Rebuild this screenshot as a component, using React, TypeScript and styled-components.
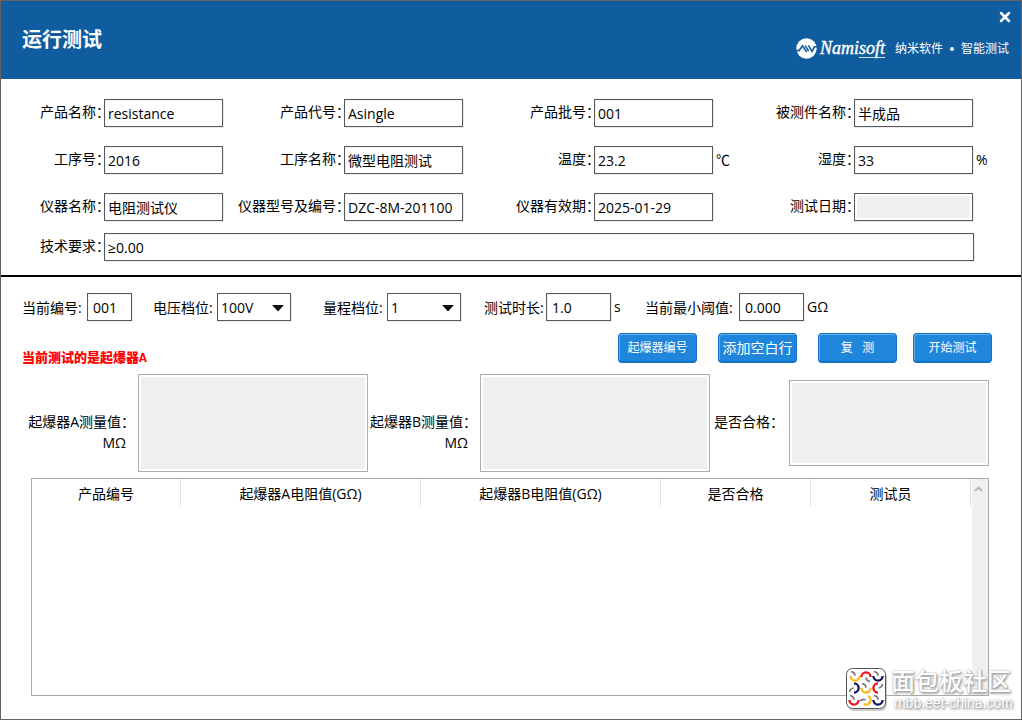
import React from "react";
import styled, { createGlobalStyle } from "styled-components";

const ink = "#000";
const fieldBorder = "#58585a";

const GlobalStyle = createGlobalStyle`
  *, *::before, *::after { box-sizing: border-box; }
  body { margin: 0; background: #fff; }
  body, input, select, button, textarea {
    font-family: "Open Sans", "Noto Sans CJK SC", sans-serif;
    font-size: 14px;
    color: ${ink};
  }
`;

const Window = styled.main`
  position: relative;
  display: flex;
  flex-direction: column;
  min-height: 100vh;
  border: 1px solid #636363;
  background: #fff;
`;

const Header = styled.header`
  display: flex;
  justify-content: space-between;
  height: 78px;
  padding: 0 10px 0 21px;
  background: #0f5d9f;
  color: #fff;
`;

const Title = styled.h1`
  margin: 0;
  align-self: center;
  font-size: 20px;
  line-height: 24px;
  font-weight: 700;
`;

const HeaderSide = styled.div`
  display: flex;
  flex-direction: column;
  align-items: flex-end;
  gap: 14px;
  padding-top: 10px;
`;

const CloseButton = styled.button`
  display: flex;
  width: 12px;
  height: 12px;
  padding: 0;
  border: 0;
  background: none;
  color: #fff;
  cursor: pointer;
`;

const Brand = styled.div`
  display: flex;
  align-items: center;
  gap: 2px;
  height: 22px;
  margin-right: 2px;
`;

const BrandName = styled.span`
  padding-left: 1px;
  font-family: "Liberation Serif", serif;
  font-style: italic;
  font-size: 18px;
  line-height: 20px;
  -webkit-text-stroke: 0.4px #fff;
`;

const BrandTail = styled.span`
  display: inline-block;
  border-bottom: 1px solid #cfe0ee;
  line-height: 18px;
`;

const Tagline = styled.span`
  display: flex;
  align-items: center;
  gap: 7px;
  margin-left: 8px;
  padding-top: 1px;
  font-size: 12px;
  line-height: 16px;
`;

const Dot = styled.span`
  width: 4px;
  height: 4px;
  border-radius: 50%;
  background: #fff;
`;

const InfoForm = styled.form`
  display: grid;
  grid-template-columns:
    103px minmax(0, 1fr) 14px 107px minmax(0, 1fr) 14px
    117px minmax(0, 1fr) 14px 127px minmax(0, 1fr) 14px;
  row-gap: 19px;
  padding: 20px 34px 12px 0;
`;

const WideForm = styled.form`
  display: grid;
  grid-template-columns: 103px minmax(0, 1fr);
  padding: 0 47px 14px 0;
  border-bottom: 2px solid #000;
`;

const FormLabel = styled.label`
  justify-self: end;
  margin-right: -6px;
  line-height: 26px;
  white-space: nowrap;
`;

const Unit = styled.span`
  padding-left: 3px;
  line-height: 28px;
  white-space: nowrap;
`;

const TextInput = styled.input<{ $inset?: number }>`
  position: relative;
  width: 100%;
  min-width: 0;
  height: 28px;
  padding: 0 3px 0 ${(p) => p.$inset ?? 3}px;
  border: 1px solid ${fieldBorder};
  border-radius: 0;
  outline: 0;
  background: #fff;
  box-shadow: 1px 1px 0 #ececec, inset 1px 1px 0 #f3f3f3;

  &:disabled {
    background: #efefef;
    box-shadow: 1px 1px 0 #ececec, inset 0 0 0 2px #fff;
  }
`;

const Settings = styled.form`
  display: grid;
  grid-template-columns: 131px 170px 161px 161px 1fr;
  padding: 16px 21px 12px;
`;

const Setting = styled.div<{ $label: number; $field: number }>`
  display: grid;
  grid-template-columns: ${(p) => p.$label}px ${(p) => p.$field}px auto;
  justify-content: start;
  height: 28px;
  line-height: 30px;
  white-space: nowrap;
`;

const SelectBox = styled.div`
  position: relative;
  height: 28px;

  svg {
    position: absolute;
    right: 7px;
    top: 12px;
    pointer-events: none;
  }
`;

const Select = styled.select`
  display: block;
  width: 100%;
  height: 28px;
  padding: 1px 20px 0 3px;
  border: 1px solid ${fieldBorder};
  border-radius: 0;
  background: #fff;
  appearance: none;
  box-shadow: 1px 1px 0 #ececec;
`;

const ActionRow = styled.div`
  display: flex;
  align-items: flex-start;
  justify-content: space-between;
  padding: 0 29px 7px 21px;
`;

const Notice = styled.p`
  margin: 0;
  padding-top: 18px;
  color: #f00;
  font-family: "Liberation Mono", "Noto Sans CJK SC", monospace;
  font-size: 13px;
  line-height: 16px;
  font-weight: 900;
`;

const Actions = styled.div`
  display: flex;
  gap: 21px;
`;

const ActionButton = styled.button<{ $large?: boolean }>`
  width: 79px;
  height: 30px;
  padding: 1px 0 0;
  border: 1px solid #1272c8;
  border-bottom-width: 2px;
  border-radius: 4px;
  background: #2086dc;
  box-shadow: inset 1px 1px 0 #62aeea;
  color: #fff;
  font-size: ${(p) => (p.$large ? 14 : 12)}px;
  line-height: 26px;
  font-weight: 400;
  white-space: pre;
  cursor: pointer;

  &:last-child { margin-left: -5px; }
`;

const Readings = styled.div`
  display: grid;
  grid-template-columns: 137px 230fr 112px 230fr 79px 200fr;
  align-items: start;
  padding-right: 32px;
`;

const ReadingLabel = styled.label<{ $end: number }>`
  display: flex;
  flex-direction: column;
  align-items: flex-end;
  padding: 37px ${(p) => p.$end}px 0 0;
  line-height: 21px;
  white-space: nowrap;
`;

const ReadingUnit = styled.span`
  padding-right: 9px;
`;

const ReadingBox = styled.input<{ $small?: boolean }>`
  width: 100%;
  min-width: 0;
  height: ${(p) => (p.$small ? 86 : 98)}px;
  margin: ${(p) => (p.$small ? 6 : 0)}px 0 0;
  padding: 0 8px;
  border: 1px solid #abadb3;
  border-radius: 0;
  background: #efefef;
  box-shadow: inset 0 0 0 2px #fff;
  font-size: 32px;
`;

const TablePanel = styled.section`
  display: flex;
  flex: 1;
  min-height: 200px;
  margin: 6px 32px 23px 30px;
  border: 1px solid #a9a9a9;
`;

const TableArea = styled.div`
  flex: 1;
  min-width: 0;
`;

const ResultTable = styled.table`
  width: 100%;
  border-collapse: separate;
  border-spacing: 0;
  table-layout: fixed;
`;

const HeadCell = styled.th`
  height: 26px;
  padding: 3px 0 0;
  border-right: 1px solid #e2e2e2;
  font-weight: 400;
  line-height: 24px;
  white-space: nowrap;
`;

const ScrollTrack = styled.div`
  display: flex;
  justify-content: center;
  width: 16px;
  margin-left: 1px;
  padding: 7px 3px 0 0;
  background: #f0f0f0;
`;

const Watermark = styled.aside`
  position: absolute;
  right: 8px;
  bottom: 7px;
  display: flex;
  gap: 3px;
  color: #fff;
  pointer-events: none;
`;

const WatermarkText = styled.div`
  display: flex;
  flex-direction: column;
  font-family: "Liberation Sans", "Noto Sans CJK SC", sans-serif;
  text-shadow: 0 0 2px #aaa, 1px 1px 2px #999, 1px 2px 3px #bbb;
`;

const WatermarkName = styled.span`
  font-size: 24px;
  line-height: 27px;
  font-weight: 500;
`;

const WatermarkUrl = styled.span`
  padding-left: 3px;
  font-size: 14px;
  line-height: 16px;
`;

const CloseIcon = () => (
  <svg width="12" height="12" viewBox="0 0 12 12" aria-hidden="true">
    <path d="M2 2L10 10M10 2L2 10" stroke="currentColor" strokeWidth="2.5" strokeLinecap="round" />
  </svg>
);

const BrandMark = () => (
  <svg width="21" height="21" viewBox="0 0 21 21" aria-hidden="true">
    <circle cx="10.5" cy="10.5" r="10.2" fill="#fff" />
    <g fill="none" stroke="#0f5d9f" strokeWidth="1.6">
      <path d="M0 12.6H3L6.6 7.8L10.6 14" />
      <path d="M9.2 7.6L12.6 13.2" />
      <path d="M12.4 7.4L16 13.4L18.4 8.8H21" />
    </g>
  </svg>
);

const Caret = () => (
  <svg width="12" height="7" viewBox="0 0 12 7" aria-hidden="true">
    <path d="M0 0H12L6 6.5Z" fill="#111" />
  </svg>
);

const ScrollUp = () => (
  <svg width="9" height="6" viewBox="0 0 9 6" aria-hidden="true">
    <path d="M1 5L4.5 1.5L8 5" fill="none" stroke="#b5b5b5" strokeWidth="1.8" />
  </svg>
);

const yellow = "#fdb813";
const red = "#f01018";
const navy = "#14145c";

const arcs = [
  { x: 9, y: 8, turn: 0, color: yellow },
  { x: 20, y: 9, turn: 180, color: red },
  { x: 32, y: 8, turn: 0, color: navy },
  { x: 8, y: 20, turn: -90, color: navy },
  { x: 20, y: 20, turn: 0, color: yellow },
  { x: 32, y: 20, turn: 90, color: red },
  { x: 8, y: 32, turn: 0, color: red },
  { x: 20, y: 32, turn: -60, color: yellow },
  { x: 32, y: 32, turn: 0, color: navy },
];

const CommunityMark = () => (
  <svg width="42" height="44" viewBox="0 0 42 44" aria-hidden="true">
    <rect x="2" y="3" width="39" height="40" rx="6" fill="#999" opacity=".5" />
    <rect x="0.5" y="0.5" width="39" height="40" rx="6" fill="#fff" stroke="#555" />
    {arcs.map((a) => (
      <g key={`${a.x}-${a.y}`} transform={`translate(${a.x} ${a.y}) rotate(${a.turn})`} fill="none">
        <path d="M-4 -4.4A4.5 4.5 0 0 1 0 -0.4" stroke="#777" strokeWidth="1.7" />
        <path d="M-4.6 0A4.6 4.6 0 0 0 4.6 0" stroke={a.color} strokeWidth="2.3" />
      </g>
    ))}
  </svg>
);

interface Field {
  id: string;
  label: string;
  value?: string;
  unit?: string;
  disabled?: boolean;
}

const fields: Field[] = [
  { id: "product-name", label: "产品名称：", value: "resistance" },
  { id: "product-code", label: "产品代号：", value: "Asingle" },
  { id: "product-batch", label: "产品批号：", value: "001" },
  { id: "part-name", label: "被测件名称：", value: "半成品" },
  { id: "process-no", label: "工序号：", value: "2016" },
  { id: "process-name", label: "工序名称：", value: "微型电阻测试" },
  { id: "temperature", label: "温度：", value: "23.2", unit: "℃" },
  { id: "humidity", label: "湿度：", value: "33", unit: "%" },
  { id: "meter-name", label: "仪器名称：", value: "电阻测试仪" },
  { id: "meter-model", label: "仪器型号及编号：", value: "DZC-8M-201100" },
  { id: "meter-expiry", label: "仪器有效期：", value: "2025-01-29" },
  { id: "test-date", label: "测试日期：", value: "", disabled: true },
];

const columns = [
  { name: "产品编号", width: 149 },
  { name: "起爆器A电阻值(GΩ)", width: 240 },
  { name: "起爆器B电阻值(GΩ)", width: 240 },
  { name: "是否合格", width: 150 },
  { name: "测试员", width: 160 },
];

export default function App() {
  return (
    <>
      <GlobalStyle />
      <Window>
        <Header>
          <Title>运行测试</Title>
          <HeaderSide>
            <CloseButton type="button" aria-label="关闭">
              <CloseIcon />
            </CloseButton>
            <Brand>
              <BrandMark />
              <BrandName>
                Nami<BrandTail>soft</BrandTail>
              </BrandName>
              <Tagline>
                <span>纳米软件</span>
                <Dot />
                <span>智能测试</span>
              </Tagline>
            </Brand>
          </HeaderSide>
        </Header>

        <InfoForm>
          {fields.map((f) => (
            <React.Fragment key={f.id}>
              <FormLabel htmlFor={f.id}>{f.label}</FormLabel>
              <TextInput id={f.id} defaultValue={f.value} disabled={f.disabled} />
              <Unit>{f.unit}</Unit>
            </React.Fragment>
          ))}
        </InfoForm>
        <WideForm>
          <FormLabel htmlFor="requirement">技术要求：</FormLabel>
          <TextInput id="requirement" defaultValue="≥0.00" />
        </WideForm>

        <Settings>
          <Setting $label={65} $field={45}>
            <label htmlFor="current-no">当前编号:</label>
            <TextInput id="current-no" $inset={5} defaultValue="001" />
          </Setting>
          <Setting $label={64} $field={74}>
            <label htmlFor="voltage">电压档位:</label>
            <SelectBox>
              <Select id="voltage" defaultValue="100V">
                <option>100V</option>
              </Select>
              <Caret />
            </SelectBox>
          </Setting>
          <Setting $label={64} $field={74}>
            <label htmlFor="range">量程档位:</label>
            <SelectBox>
              <Select id="range" defaultValue="1">
                <option>1</option>
              </Select>
              <Caret />
            </SelectBox>
          </Setting>
          <Setting $label={62} $field={65}>
            <label htmlFor="duration">测试时长:</label>
            <TextInput id="duration" $inset={5} defaultValue="1.0" />
            <Unit>s</Unit>
          </Setting>
          <Setting $label={94} $field={65}>
            <label htmlFor="threshold">当前最小阈值:</label>
            <TextInput id="threshold" $inset={5} defaultValue="0.000" />
            <Unit>GΩ</Unit>
          </Setting>
        </Settings>

        <ActionRow>
          <Notice>当前测试的是起爆器A</Notice>
          <Actions>
            <ActionButton type="button">起爆器编号</ActionButton>
            <ActionButton type="button" $large>添加空白行</ActionButton>
            <ActionButton type="button">{"复   测"}</ActionButton>
            <ActionButton type="button">开始测试</ActionButton>
          </Actions>
        </ActionRow>

        <Readings>
          <ReadingLabel htmlFor="reading-a" $end={3}>
            <span>起爆器A测量值：</span>
            <ReadingUnit>MΩ</ReadingUnit>
          </ReadingLabel>
          <ReadingBox id="reading-a" disabled />
          <ReadingLabel htmlFor="reading-b" $end={3}>
            <span>起爆器B测量值：</span>
            <ReadingUnit>MΩ</ReadingUnit>
          </ReadingLabel>
          <ReadingBox id="reading-b" disabled />
          <ReadingLabel htmlFor="verdict" $end={5}>
            <span>是否合格：</span>
          </ReadingLabel>
          <ReadingBox id="verdict" $small disabled />
        </Readings>

        <TablePanel>
          <TableArea>
            <ResultTable>
              <colgroup>
                {columns.map((c) => (
                  <col key={c.name} width={c.width} />
                ))}
              </colgroup>
              <thead>
                <tr>
                  {columns.map((c) => (
                    <HeadCell key={c.name} scope="col">{c.name}</HeadCell>
                  ))}
                </tr>
              </thead>
              <tbody />
            </ResultTable>
          </TableArea>
          <ScrollTrack>
            <ScrollUp />
          </ScrollTrack>
        </TablePanel>

        <Watermark>
          <CommunityMark />
          <WatermarkText>
            <WatermarkName>面包板社区</WatermarkName>
            <WatermarkUrl>mbb.eet-china.com</WatermarkUrl>
          </WatermarkText>
        </Watermark>
      </Window>
    </>
  );
}
